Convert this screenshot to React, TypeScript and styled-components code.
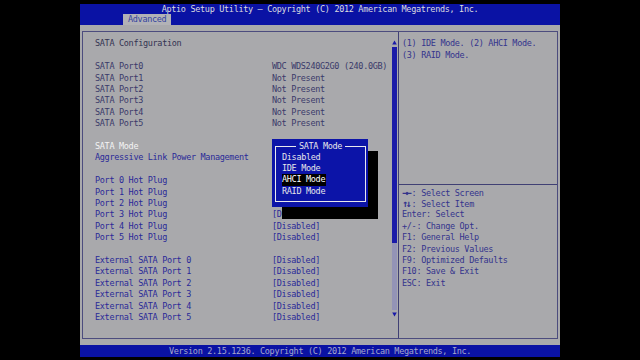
import React from "react";
import styled, { createGlobalStyle } from "styled-components";

const GlobalStyle = createGlobalStyle`
  html, body { margin: 0; padding: 0; background: #000; }
  #root { width: 640px; height: 360px; }
`;

const FONT = `"DejaVu Sans Mono", "Liberation Mono", monospace`;
const LINE = "11.42px";

const Stage = styled.div`
  width: 640px;
  height: 360px;
  box-sizing: border-box;
  padding: 4px 0 3px;
  background: #000;
  display: flex;
  justify-content: center;
  font-family: ${FONT};
  font-size: 8.5px;
  letter-spacing: -0.32px;
  white-space: pre;
`;

const Screen = styled.div`
  width: 480px;
  display: flex;
  flex-direction: column;
`;

const Header = styled.header`
  height: 21px;
  background: #0a12a4;
  display: flex;
  flex-direction: column;
`;

const Title = styled.div`
  height: 10px;
  line-height: 10px;
  text-align: center;
  color: #dcdce0;
`;

const TabRow = styled.div`
  height: 11px;
  display: flex;
  padding-left: 43px;
`;

const Tab = styled.div`
  background: #b2b2b6;
  color: #3444a0;
  line-height: 11px;
  padding: 0 5px;
`;

const Main = styled.main`
  position: relative;
  flex: 1;
  background: #a9a9ac;
  padding: 6px 2px;
  display: flex;
`;

const Frame = styled.div`
  flex: 1;
  border: 1px solid #4c4c7e;
  display: flex;
`;

const LeftPanel = styled.section`
  width: 309px;
  box-sizing: border-box;
  padding: 6.3px 0 0 12px;
  display: flex;
  flex-direction: column;
`;

type Tone = "head" | "info" | "sel" | "active";
const toneColor: Record<Tone, string> = {
  head: "#333352",
  info: "#3a3a6a",
  sel: "#2a2a98",
  active: "#f4f4f4",
};

const Row = styled.div`
  height: ${LINE};
  line-height: ${LINE};
  display: flex;
`;

const Label = styled.span<{ $tone: Tone }>`
  width: 177px;
  color: ${(p) => toneColor[p.$tone]};
`;

const Value = styled.span<{ $tone: Tone }>`
  color: ${(p) => toneColor[p.$tone]};
`;

const ScrollBar = styled.div`
  width: 6px;
  box-sizing: border-box;
  padding: 8px 0 21px;
  display: flex;
  flex-direction: column;
  align-items: flex-start;
`;

const Arrow = styled.svg`
  display: block;
  width: 5px;
  height: 5px;
  flex: none;
`;

const Track = styled.div`
  flex: 1;
  width: 5px;
  margin: 2px 0;
  background: #9494b6;
  display: flex;
  flex-direction: column;
`;

const Thumb = styled.div`
  height: 196px;
  background: #1a1aa8;
`;

const RightPanel = styled.aside`
  flex: 1;
  border-left: 1px solid #404074;
  display: flex;
  flex-direction: column;
  color: #34348c;
`;

const HelpTop = styled.div`
  height: 152px;
  box-sizing: border-box;
  padding: 6.3px 0 0 3px;
`;

const HelpBottom = styled.div`
  border-top: 1px solid #404074;
  padding: 1.5px 0 0 3px;
`;

const HelpLine = styled.div`
  height: ${LINE};
  line-height: ${LINE};
`;

const KeyGlyph = styled.span`
  display: inline-block;
  width: 9.6px;
  font-size: 10px;
  font-weight: bold;
  letter-spacing: -2.4px;
`;

const Footer = styled.footer`
  height: 12px;
  line-height: 12px;
  background: #0a12a4;
  color: #a8a8cc;
  text-align: center;
`;

const Popup = styled.div`
  position: absolute;
  left: 192px;
  top: 114px;
  width: 96px;
  height: 68px;
  box-sizing: border-box;
  padding: 7px 2px 5px 3px;
  background: #0c14a8;
  box-shadow: 10px 12px 0 #000;
  color: #e6e6ea;
`;

const PopupBorder = styled.div`
  position: relative;
  height: 100%;
  box-sizing: border-box;
  border: 1px solid #e8e8ee;
  padding: 4.6px 0 0 6px;
`;

const PopupTitle = styled.div`
  position: absolute;
  top: -6.2px;
  left: 0;
  right: 0;
  height: ${LINE};
  line-height: ${LINE};
  text-align: center;
`;

const PopupTitleText = styled.span`
  background: #0c14a8;
  padding: 0 3px;
`;

const PopupItem = styled.div`
  height: ${LINE};
  line-height: ${LINE};
`;

const PopupItemText = styled.span<{ $active?: boolean }>`
  display: inline-block;
  padding: 0 1px 0 0;
  background: ${(p) => (p.$active ? "#000" : "transparent")};
  color: ${(p) => (p.$active ? "#ffffff" : "inherit")};
`;

type Line = { label?: string; value?: string; lt?: Tone; vt?: Tone };

// Values hidden beneath the open popup are left empty.
const hidden = new Set([0, 1, 2]);

const lines: Line[] = [
  { label: "SATA Configuration", lt: "head" },
  {},
  { label: "SATA Port0", value: "WDC WDS240G2G0 (240.0GB)", lt: "info", vt: "info" },
  { label: "SATA Port1", value: "Not Present", lt: "info", vt: "info" },
  { label: "SATA Port2", value: "Not Present", lt: "info", vt: "info" },
  { label: "SATA Port3", value: "Not Present", lt: "info", vt: "info" },
  { label: "SATA Port4", value: "Not Present", lt: "info", vt: "info" },
  { label: "SATA Port5", value: "Not Present", lt: "info", vt: "info" },
  {},
  { label: "SATA Mode", value: "", lt: "active", vt: "sel" },
  { label: "Aggressive Link Power Management", value: "", lt: "sel", vt: "sel" },
  {},
  ...[0, 1, 2, 3, 4, 5].map((i) => ({
    label: `Port ${i} Hot Plug`,
    value: hidden.has(i) ? "" : "[Disabled]",
    lt: "sel" as Tone,
    vt: "sel" as Tone,
  })),
  {},
  ...[0, 1, 2, 3, 4, 5].map((i) => ({
    label: `External SATA Port ${i}`,
    value: "[Disabled]",
    lt: "sel" as Tone,
    vt: "sel" as Tone,
  })),
];

const helpKeys: [string, string][] = [
  ["→←", ": Select Screen"],
  ["↑↓", ": Select Item"],
  ["", "Enter: Select"],
  ["", "+/-: Change Opt."],
  ["", "F1: General Help"],
  ["", "F2: Previous Values"],
  ["", "F9: Optimized Defaults"],
  ["", "F10: Save & Exit"],
  ["", "ESC: Exit"],
];

const modes = ["Disabled", "IDE Mode", "AHCI Mode", "RAID Mode"];

export default function App() {
  return (
    <>
      <GlobalStyle />
      <Stage>
        <Screen>
          <Header>
            <Title>Aptio Setup Utility – Copyright (C) 2012 American Megatrends, Inc.</Title>
            <TabRow>
              <Tab>Advanced</Tab>
            </TabRow>
          </Header>
          <Main>
            <Frame>
              <LeftPanel>
                {lines.map((l, i) => (
                  <Row key={i}>
                    <Label $tone={l.lt ?? "info"}>{l.label ?? ""}</Label>
                    <Value $tone={l.vt ?? "info"}>{l.value ?? ""}</Value>
                  </Row>
                ))}
              </LeftPanel>
              <ScrollBar>
                <Arrow viewBox="0 0 5 5">
                  <polygon points="2.5,0.5 4.8,4.5 0.2,4.5" fill="#1a1aa8" />
                </Arrow>
                <Track>
                  <Thumb />
                </Track>
                <Arrow viewBox="0 0 5 5">
                  <polygon points="0.2,0.5 4.8,0.5 2.5,4.5" fill="#1a1aa8" />
                </Arrow>
              </ScrollBar>
              <RightPanel>
                <HelpTop>
                  <HelpLine>(1) IDE Mode. (2) AHCI Mode.</HelpLine>
                  <HelpLine>(3) RAID Mode.</HelpLine>
                </HelpTop>
                <HelpBottom>
                  {helpKeys.map(([g, t]) => (
                    <HelpLine key={t}>
                      {g && <KeyGlyph>{g}</KeyGlyph>}
                      {t}
                    </HelpLine>
                  ))}
                </HelpBottom>
              </RightPanel>
            </Frame>
            <Popup>
              <PopupBorder>
                <PopupTitle>
                  <PopupTitleText>SATA Mode</PopupTitleText>
                </PopupTitle>
                {modes.map((m) => (
                  <PopupItem key={m}>
                    <PopupItemText $active={m === "AHCI Mode"}>{m}</PopupItemText>
                  </PopupItem>
                ))}
              </PopupBorder>
            </Popup>
          </Main>
          <Footer>Version 2.15.1236. Copyright (C) 2012 American Megatrends, Inc.</Footer>
        </Screen>
      </Stage>
    </>
  );
}
